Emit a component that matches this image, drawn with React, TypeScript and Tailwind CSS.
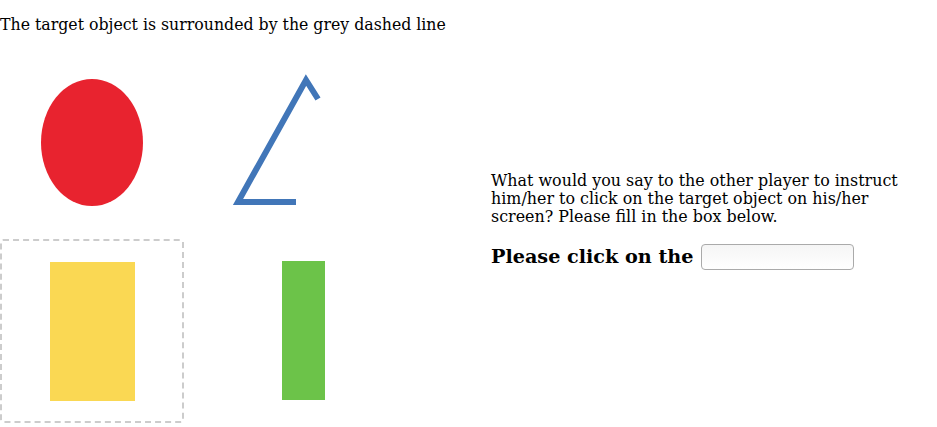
import React from "react";

const serif = { fontFamily: '"DejaVu Serif", serif' };

function Cell({ children, dashed, tall }: { children: React.ReactNode; dashed?: boolean; tall?: boolean }) {
  return (
    <div
      className={`w-[184px] rounded-[3px] ${tall ? "h-[184px]" : "h-[183px]"} ${
        dashed ? "border-2 border-dashed border-[#cccccc]" : "border-2 border-transparent"
      }`}
    >
      {children}
    </div>
  );
}

export default function App() {
  return (
    <div className="w-[937px] h-[427px] bg-white text-black overflow-hidden" style={serif}>
      <p className="pt-[15px] text-[15.75px] leading-[19px]">
        The target object is surrounded by the grey dashed line
      </p>
      <div className="flex mt-[22px]">
        {/* grid of objects */}
        <div className="grid grid-cols-[184px_184px]">
          <Cell>
            <svg width="180" height="179" viewBox="0 0 180 179">
              <ellipse cx="90" cy="84.5" rx="51" ry="63.5" fill="#e8232f" />
            </svg>
          </Cell>
          <Cell>
            <svg width="180" height="179" viewBox="0 0 180 179">
              <polyline
                points="110,144 52,144 120,22 132,41"
                fill="none"
                stroke="#4176b8"
                strokeWidth="6"
                strokeLinejoin="miter"
              />
            </svg>
          </Cell>
          <Cell dashed tall>
            <div className="pl-[48px] pt-[21px]">
              <div className="w-[85px] h-[139px] bg-[#fad853]" />
            </div>
          </Cell>
          <Cell tall>
            <div className="pl-[96px] pt-[20px]">
              <div className="w-[43px] h-[139px] bg-[#6cc349]" />
            </div>
          </Cell>
        </div>

        {/* question */}
        <div className="ml-[123px] mt-[116px] w-[420px]">
          <p className="text-[15.9px] leading-[18px] w-[412px]">
            What would you say to the other player to instruct him/her to click on the target object on his/her
            screen? Please fill in the box below.
          </p>
          <div className="flex items-center mt-[17px]">
            <span className="text-[19.2px] font-bold">Please click on the</span>
            <input
              type="text"
              className="ml-[8px] w-[153px] h-[26px] rounded-[4px] border border-[#aaaaaa] bg-gradient-to-b from-[#f5f5f5] to-white outline-none"
            />
          </div>
        </div>
      </div>
    </div>
  );
}
